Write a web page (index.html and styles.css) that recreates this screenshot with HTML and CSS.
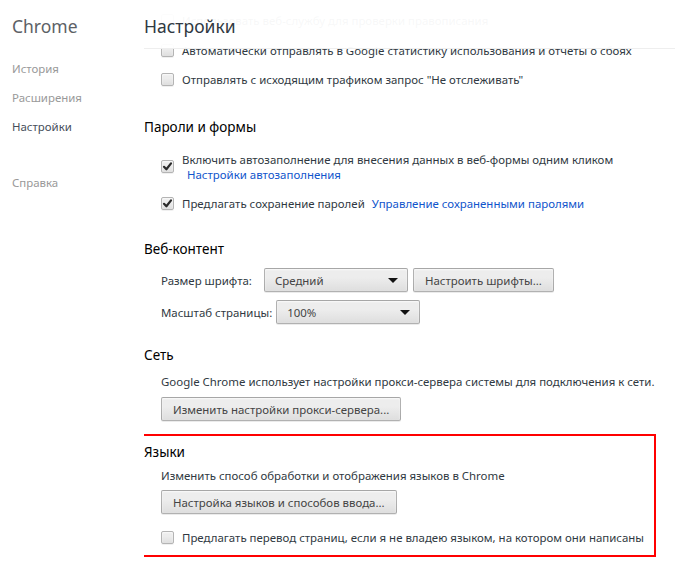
FILE: index.html
```html
<!DOCTYPE html>
<html lang="ru">
<head>
<meta charset="utf-8">
<title>Настройки</title>
<link rel="stylesheet" href="styles.css">
</head>
<body>
<div class="page">
  <nav class="sidebar">
    <div class="brand">Chrome</div>
    <ul class="nav">
      <li class="nav-item">История</li>
      <li class="nav-item">Расширения</li>
      <li class="nav-item current">Настройки</li>
      <li class="nav-item help">Справка</li>
    </ul>
  </nav>
  <main class="main">
    <header class="page-header"><h1 class="page-title">Настройки</h1></header>
    <div class="content">
      <div class="row faint-row"><span class="cb"></span><span class="label">Использовать веб-службу для проверки правописания</span></div>
      <div class="row r1"><span class="cb"></span><span class="label">Автоматически отправлять в Google статистику использования и отчеты о сбоях</span></div>
      <div class="row r2"><span class="cb"></span><span class="label">Отправлять с исходящим трафиком запрос "Не отслеживать"</span></div>

      <section class="section s-pass">
        <h3 class="sec-title">Пароли и формы</h3>
        <div class="row two-line"><span class="cb checked"><svg viewBox="0 0 13 13" class="tick"><path d="M3 6.8 L5.4 9.3 L10 3.4" fill="none" stroke="#2b2b2b" stroke-width="2.2" stroke-linecap="round" stroke-linejoin="round"/></svg></span>
          <div class="label">Включить автозаполнение для внесения данных в веб-формы одним кликом<br><a class="link indent">Настройки автозаполнения</a></div>
        </div>
        <div class="row r-pw"><span class="cb checked"><svg viewBox="0 0 13 13" class="tick"><path d="M3 6.8 L5.4 9.3 L10 3.4" fill="none" stroke="#2b2b2b" stroke-width="2.2" stroke-linecap="round" stroke-linejoin="round"/></svg></span>
          <span class="label">Предлагать сохранение паролей</span><a class="link pw-link">Управление сохраненными паролями</a>
        </div>
      </section>

      <section class="section s-web">
        <h3 class="sec-title">Веб-контент</h3>
        <div class="ctrl-row fs-row">
          <span class="ctrl-label">Размер шрифта:</span>
          <div class="select sel-fs"><span>Средний</span><i class="arrow"></i></div>
          <button class="btn btn-fonts">Настроить шрифты...</button>
        </div>
        <div class="ctrl-row zoom-row">
          <span class="ctrl-label">Масштаб страницы:</span>
          <div class="select sel-zoom"><span>100%</span><i class="arrow"></i></div>
        </div>
      </section>

      <section class="section s-net">
        <h3 class="sec-title">Сеть</h3>
        <p class="desc">Google Chrome использует настройки прокси-сервера системы для подключения к сети.</p>
        <button class="btn btn-proxy">Изменить настройки прокси-сервера...</button>
      </section>

      <section class="section s-lang">
        <h3 class="sec-title">Языки</h3>
        <p class="desc">Изменить способ обработки и отображения языков в Chrome</p>
        <button class="btn btn-lang">Настройка языков и способов ввода...</button>
        <div class="row r-tr"><span class="cb"></span><span class="label">Предлагать перевод страниц, если я не владею языком, на котором они написаны</span></div>
      </section>
    </div>
  </main>
</div>
</body>
</html>
```

FILE: styles.css
```css
* { box-sizing: border-box; }
html, body { margin: 0; padding: 0; background: #fff; }
body {
  font-family: "Segoe UI", "Noto Sans", "Open Sans", sans-serif;
  font-size: 11.45px;
  color: #303942;
  width: 675px;
  height: 570px;
  overflow: hidden;
}
.page { display: flex; height: 570px; }

.sidebar { width: 144px; flex: none; padding-left: 12px; }
.brand {
  font-size: 17.5px;
  line-height: 24px;
  color: #5c6166;
  margin-top: 14px;
  font-weight: 400;
}
.nav { list-style: none; margin: 23px 0 0; padding: 0; }
.nav-item { font-size: 11.45px; line-height: 16px; color: #999; margin-bottom: 13px; }
.nav-item.current { color: #464e5a; }
.nav-item.help { margin-top: 40px; }

.main { flex: 1; position: relative; overflow: hidden; }
.page-header {
  position: absolute;
  left: 0; right: 0; top: 0;
  height: 49px;
  background: rgba(255,255,255,0.96);
  border-bottom: 1px solid #eee;
  z-index: 2;
}
.page-title {
  margin: 0;
  font-size: 17.5px;
  font-weight: 400;
  line-height: 24px;
  color: #303942;
  padding-top: 14px;
}
.content { padding-top: 10px; }

.row { display: flex; align-items: center; padding-left: 17px; height: 20px; }
.cb {
  width: 13px; height: 13px; flex: none;
  border: 1px solid #b4b4b4;
  border-radius: 2px;
  background: linear-gradient(#ededed, #ededed 38%, #dedede);
  box-shadow: inset 0 1px 2px rgba(255,255,255,0.75), 0 1px 0 rgba(0,0,0,0.06);
  margin-right: 8px;
  position: relative;
}
.tick { position: absolute; left: -1px; top: -1px; width: 13px; height: 13px; }
.label { line-height: 15px; white-space: nowrap; }
.r1 { margin-top: 10px; }
.r2 { margin-top: 9px; }

.section { margin: 0; }
.sec-title {
  margin: 0;
  font-size: 13.5px;
  font-weight: 400;
  line-height: 20px;
  color: #000;
}
.s-pass { margin-top: 28px; }
.row.two-line { height: 31px; margin-top: 14px; }
.link { color: #15c; text-decoration: none; }
.indent { margin-left: 5px; }
.r-pw { margin-top: 11px; }
.pw-link { margin-left: 7px; line-height: 15px; white-space: nowrap; }

.s-web { margin-top: 26px; }
.ctrl-row { display: flex; align-items: center; padding-left: 17px; height: 24px; }
.fs-row { margin-top: 9px; }
.zoom-row { margin-top: 8px; }
.ctrl-label { white-space: nowrap; }
.select, .btn {
  height: 24px;
  border: 1px solid rgba(0,0,0,0.25);
  border-radius: 2px;
  background: linear-gradient(#ededed, #ededed 38%, #dedede);
  box-shadow: 0 1px 0 rgba(0,0,0,0.08), inset 0 1px 2px rgba(255,255,255,0.75);
  color: #444;
  font-family: inherit;
  font-size: 11.45px;
}
.select {
  width: 144px;
  display: flex; align-items: center; justify-content: space-between;
  padding: 0 9px 0 10px;
}
.arrow {
  width: 0; height: 0;
  border-left: 5px solid transparent;
  border-right: 5px solid transparent;
  border-top: 5px solid #111;
}
.sel-fs { margin-left: 12px; }
.sel-zoom { margin-left: 4px; }
.btn { padding: 0 11px; margin: 0; cursor: default; display: flex; align-items: center; }
.btn-fonts { margin-left: 5px; }

.s-net { margin-top: 21px; }
.desc { margin: 9px 0 0 17px; line-height: 15px; white-space: nowrap; }
.s-net .btn, .s-lang .btn { margin-left: 17px; margin-top: 8px; }

.s-lang {
  margin: 13px 19px 0 -23px;
  border: 2px solid #f00;
  padding: 6px 0 8px 21px;
}
.s-lang .desc { margin-top: 6px; }
.s-lang .btn { margin-top: 7px; }
.r-tr { margin-top: 13px; }
```
